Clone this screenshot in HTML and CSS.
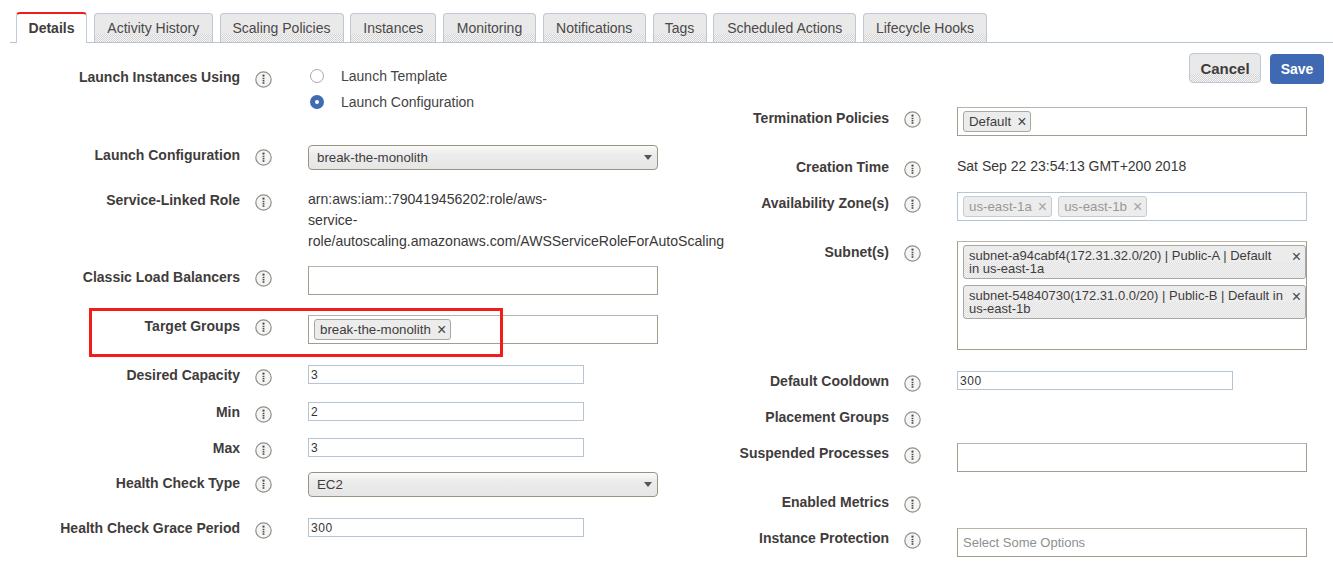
FILE: index.html
```html
<!DOCTYPE html>
<html lang="en">

<head>
    <meta charset="UTF-8">
    <meta name="viewport" content="width=device-width, initial-scale=1.0">
    <title>Auto Scaling Group Details</title>
    <link rel="stylesheet" href="styles.css">
</head>

<body>
    <svg class="icon-defs" width="0" height="0">
        <symbol id="info" viewBox="0 0 17 17">
            <circle cx="8.5" cy="8.5" r="7.7" fill="#f5f5f3" stroke="#8f8f8b" stroke-width="1.2"/>
            <rect x="7.5" y="3.6" width="2" height="2" fill="#4a4a4a"/>
            <rect x="7.6" y="6.8" width="1.8" height="1.4" fill="#4a4a4a"/>
            <rect x="7.6" y="9" width="1.8" height="1.4" fill="#4a4a4a"/>
            <rect x="7.6" y="11.2" width="1.8" height="1.6" fill="#4a4a4a"/>
        </symbol>
    </svg>

    <ul class="tabs">
        <li class="tab active">Details</li>
        <li class="tab">Activity History</li>
        <li class="tab">Scaling Policies</li>
        <li class="tab">Instances</li>
        <li class="tab">Monitoring</li>
        <li class="tab">Notifications</li>
        <li class="tab">Tags</li>
        <li class="tab">Scheduled Actions</li>
        <li class="tab">Lifecycle Hooks</li>
    </ul>

    <div class="form">
        <!-- left column -->
        <div class="col col-left">
            <div class="row mt-24">
                <div class="row-label">Launch Instances Using</div>
                <svg class="info"><use href="#info"/></svg>
                <div class="radios">
                    <div class="radio-line"><span class="radio"></span>Launch Template</div>
                    <div class="radio-line"><span class="radio checked"></span>Launch Configuration</div>
                </div>
            </div>

            <div class="row mt-33">
                <div class="row-label">Launch Configuration</div>
                <svg class="info"><use href="#info"/></svg>
                <div class="select">break-the-monolith<span class="caret"></span></div>
            </div>

            <div class="row mt-20">
                <div class="row-label">Service-Linked Role</div>
                <svg class="info"><use href="#info"/></svg>
                <div class="value-wrap">arn:aws:iam::790419456202:role/aws-<br>service-<br>role/autoscaling.amazonaws.com/AWSServiceRoleForAutoScaling</div>
            </div>

            <div class="row mt-14">
                <div class="row-label nudge">Classic Load Balancers</div>
                <svg class="info"><use href="#info"/></svg>
                <div class="box"></div>
            </div>

            <div class="row mt-20">
                <div class="row-label nudge">Target Groups</div>
                <svg class="info"><use href="#info"/></svg>
                <div class="box">
                    <span class="tag">break-the-monolith<span class="tag-x">×</span></span>
                </div>
            </div>

            <div class="row mt-21">
                <div class="row-label">Desired Capacity</div>
                <svg class="info"><use href="#info"/></svg>
                <input class="text-input" type="text" value="3">
            </div>

            <div class="row mt-17">
                <div class="row-label">Min</div>
                <svg class="info"><use href="#info"/></svg>
                <input class="text-input" type="text" value="2">
            </div>

            <div class="row mt-16">
                <div class="row-label">Max</div>
                <svg class="info"><use href="#info"/></svg>
                <input class="text-input" type="text" value="3">
            </div>

            <div class="row mt-14">
                <div class="row-label nudge">Health Check Type</div>
                <svg class="info"><use href="#info"/></svg>
                <div class="select">EC2<span class="caret"></span></div>
            </div>

            <div class="row mt-21">
                <div class="row-label">Health Check Grace Period</div>
                <svg class="info"><use href="#info"/></svg>
                <input class="text-input" type="text" value="300">
            </div>
        </div>

        <!-- right column -->
        <div class="col col-right">
            <div class="actions">
                <button class="btn btn-cancel">Cancel</button>
                <button class="btn btn-save">Save</button>
            </div>

            <div class="row mt-23">
                <div class="row-label nudge">Termination Policies</div>
                <svg class="info"><use href="#info"/></svg>
                <div class="box">
                    <span class="tag">Default<span class="tag-x">×</span></span>
                </div>
            </div>

            <div class="row mt-21">
                <div class="row-label">Creation Time</div>
                <svg class="info"><use href="#info"/></svg>
                <div class="value">Sat Sep 22 23:54:13 GMT+200 2018</div>
            </div>

            <div class="row mt-15">
                <div class="row-label nudge">Availability Zone(s)</div>
                <svg class="info"><use href="#info"/></svg>
                <div class="box disabled">
                    <span class="tag">us-east-1a<span class="tag-x">×</span></span>
                    <span class="tag">us-east-1b<span class="tag-x">×</span></span>
                </div>
            </div>

            <div class="row mt-20">
                <div class="row-label nudge">Subnet(s)</div>
                <svg class="info"><use href="#info"/></svg>
                <div class="box box-tall">
                    <div class="tag tag-wide"><span class="tag-text">subnet-a94cabf4(172.31.32.0/20) | Public-A | Default in us-east-1a</span><span class="tag-x">×</span></div>
                    <div class="tag tag-wide"><span class="tag-text">subnet-54840730(172.31.0.0/20) | Public-B | Default in us-east-1b</span><span class="tag-x">×</span></div>
                </div>
            </div>

            <div class="row mt-21">
                <div class="row-label">Default Cooldown</div>
                <svg class="info"><use href="#info"/></svg>
                <input class="text-input" type="text" value="300">
            </div>

            <div class="row mt-16">
                <div class="row-label">Placement Groups</div>
                <svg class="info"><use href="#info"/></svg>
            </div>

            <div class="row mt-16">
                <div class="row-label">Suspended Processes</div>
                <svg class="info"><use href="#info"/></svg>
                <div class="box"></div>
            </div>

            <div class="row mt-20">
                <div class="row-label">Enabled Metrics</div>
                <svg class="info"><use href="#info"/></svg>
            </div>

            <div class="row mt-16">
                <div class="row-label">Instance Protection</div>
                <svg class="info"><use href="#info"/></svg>
                <div class="box placeholder">Select Some Options</div>
            </div>
        </div>

        <!-- red annotation around Target Groups -->
        <div class="callout"></div>
    </div>
</body>

</html>
```

FILE: styles.css
```css
* {
    margin: 0;
    padding: 0;
    box-sizing: border-box;
}

html, body {
    height: 100%;
    overflow: hidden;
    background: #fff;
    font-family: "Liberation Sans", Arial, sans-serif;
    font-size: 14px;
    color: #3f3c3c;
}

.icon-defs {
    position: absolute;
}

/* Tabs */
.tabs {
    display: grid;
    grid-template-columns: 71px 119px 124px 86px 93px 103px 54px 143px 124px;
    column-gap: 6.75px;
    list-style: none;
    height: 43px;
    margin-left: 10px;
    padding: 13px 0 0 6px;
    border-bottom: 1px solid #b7c4d2;
}

.tab {
    height: 29px;
    line-height: 29px;
    text-align: center;
    white-space: nowrap;
    border: 1px solid #bcc8d4;
    border-bottom: 0;
    border-radius: 4px 4px 0 0;
    background:
        linear-gradient(#e9e9e9 72%, transparent 72%),
        repeating-conic-gradient(#d4d4d4 0 25%, #f4f4f4 0 50%) 0 0 / 2px 2px;
    color: #4a4848;
}

.tab.active {
    height: 31px;
    margin-top: -1px;
    background: #fff;
    border-color: #c3ccd6;
    border-top: 2px solid #ee1c1c;
    color: #3f3c3c;
    font-weight: bold;
}

/* Form layout */
.form {
    display: flex;
    position: relative;
}

.col {
    display: flex;
    flex-direction: column;
}

.col-left {
    width: 725px;
    --label-width: 240px;
}

.col-right {
    flex: 1;
    --label-width: 164px;
}

.row {
    display: flex;
    align-items: flex-start;
}

.row-label {
    width: var(--label-width);
    flex-shrink: 0;
    text-align: right;
    font-weight: bold;
    line-height: 20px;
    white-space: nowrap;
}

.row-label.nudge {
    padding-top: 1px;
}

.info {
    flex-shrink: 0;
    width: 17px;
    height: 17px;
    margin: 4px 36px -1px 15px;
}

.mt-14 { margin-top: 14px; }
.mt-15 { margin-top: 15px; }
.mt-16 { margin-top: 16px; }
.mt-17 { margin-top: 17px; }
.mt-20 { margin-top: 20px; }
.mt-21 { margin-top: 21px; }
.mt-23 { margin-top: 23px; }
.mt-24 { margin-top: 24px; }
.mt-33 { margin-top: 33px; }

/* Radio buttons */
.radios {
    display: flex;
    flex-direction: column;
    gap: 6px;
    margin-top: -1px;
}

.radio-line {
    display: flex;
    align-items: center;
    height: 20px;
    color: #444;
}

.radio {
    width: 14px;
    height: 14px;
    margin: 0 17px 0 2px;
    border: 1px solid #a9a9a9;
    border-radius: 50%;
    background: #fff;
}

.radio.checked {
    border: 5px solid #3f6cb5;
}

/* Controls */
.select {
    position: relative;
    width: 350px;
    height: 25px;
    padding-left: 8px;
    font-size: 13.3px;
    line-height: 23px;
    border: 1px solid #9c9284;
    border-radius: 4px;
    background: linear-gradient(#fbfbfb, #ececec 35%, #e6e6e6);
    color: #3f3c3c;
}

.caret {
    position: absolute;
    right: 5px;
    top: 9px;
    border-left: 4px solid transparent;
    border-right: 4px solid transparent;
    border-top: 5px solid #555;
}

.value {
    line-height: 18px;
    color: #3a3838;
}

.value-wrap {
    margin-top: -1px;
    font-size: 14.1px;
    line-height: 21px;
    color: #3a3838;
    white-space: nowrap;
}

.box {
    display: flex;
    align-items: flex-start;
    gap: 6px;
    width: 350px;
    height: 29px;
    padding: 3px 0 0 5px;
    border: 1px solid #a59c8e;
    border-top-color: #b9b2a6;
    background: #fff;
}

.box.disabled {
    border-color: #b6c4d3;
}

.box.box-tall {
    flex-direction: column;
    height: 109px;
}

.box.placeholder {
    align-items: center;
    padding: 0 0 0 5px;
    font-size: 13px;
    color: #8f8f8f;
}

.tag {
    display: inline-flex;
    align-items: center;
    height: 21px;
    padding: 0 4px 0 5px;
    font-size: 13.3px;
    white-space: nowrap;
    border: 1px solid #a8a8a4;
    border-radius: 3px;
    background: #ececec;
    color: #3f3c3c;
}

.disabled .tag {
    border-color: #c4ccd4;
    color: #989898;
}

.tag-x {
    margin-left: 6px;
    font-size: 16px;
    line-height: 1;
    color: #444;
}

.disabled .tag-x {
    color: #a5a5a5;
}

.tag-wide {
    justify-content: space-between;
    align-items: flex-start;
    width: 343px;
    height: 34px;
    padding: 3px 4px 0 5px;
    font-size: 13px;
    line-height: 13px;
    white-space: normal;
    background:
        linear-gradient(#ececec 50%, transparent 50%),
        repeating-conic-gradient(#e0e0e0 0 25%, #f3f3f3 0 50%) 0 0 / 2px 2px;
}

.tag-text {
    width: 316px;
}

.text-input {
    width: 276px;
    height: 19px;
    padding: 0 2px;
    font-family: inherit;
    font-size: 12px;
    letter-spacing: 0.6px;
    color: #333;
    border: 1px solid #b6c4d3;
    background: #fff;
}

/* Buttons */
.actions {
    display: flex;
    justify-content: flex-end;
    gap: 9px;
    margin: 10px 9px 0 0;
}

.btn {
    height: 30px;
    font-family: inherit;
    font-size: 14px;
    font-weight: bold;
    border-radius: 4px;
}

.btn-cancel {
    width: 72px;
    font-size: 15px;
    border: 1px solid #bcc8d4;
    background:
        linear-gradient(#e9e9e9 72%, transparent 72%),
        repeating-conic-gradient(#d4d4d4 0 25%, #f4f4f4 0 50%) 0 0 / 2px 2px;
    color: #3f3c3c;
}

.btn-save {
    width: 54px;
    margin-top: 1px;
    border: 0;
    background: #4069b3;
    color: #fff;
}

/* Red box drawn over the page */
.callout {
    position: absolute;
    left: 89px;
    top: 265px;
    width: 414px;
    height: 49px;
    border: 3px solid #f21c1c;
}
```
